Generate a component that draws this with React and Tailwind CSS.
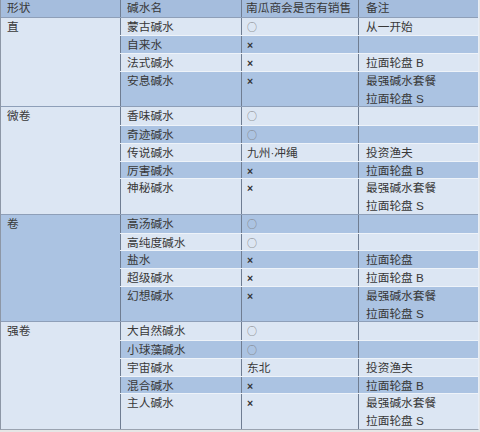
import React from 'react';

const LIGHT = 'bg-[#dce6f3]';
const DARK = 'bg-[#abc3e2]';

const groups = [
  {
    shape: '直',
    rows: [
      ['蒙古碱水', '○', ['从一开始']],
      ['自来水', '×', []],
      ['法式碱水', '×', ['拉面轮盘 B']],
      ['安息碱水', '×', ['最强碱水套餐', '拉面轮盘 S']],
    ],
  },
  {
    shape: '微卷',
    rows: [
      ['香味碱水', '○', []],
      ['奇迹碱水', '○', []],
      ['传说碱水', '九州·冲绳', ['投资渔夫']],
      ['厉害碱水', '×', ['拉面轮盘 B']],
      ['神秘碱水', '×', ['最强碱水套餐', '拉面轮盘 S']],
    ],
  },
  {
    shape: '卷',
    rows: [
      ['高汤碱水', '○', []],
      ['高纯度碱水', '○', []],
      ['盐水', '×', ['拉面轮盘']],
      ['超级碱水', '×', ['拉面轮盘 B']],
      ['幻想碱水', '×', ['最强碱水套餐', '拉面轮盘 S']],
    ],
  },
  {
    shape: '强卷',
    rows: [
      ['大自然碱水', '○', []],
      ['小球藻碱水', '○', []],
      ['宇宙碱水', '东北', ['投资渔夫']],
      ['混合碱水', '×', ['拉面轮盘 B']],
      ['主人碱水', '×', ['最强碱水套餐', '拉面轮盘 S']],
    ],
  },
];

const Sale = ({ value }) => {
  if (value === '○')
    return <span className="font-['Noto_Sans_CJK_SC',sans-serif] text-[10px] text-[#7d7d7d]">○</span>;
  if (value === '×') return <span className="text-[10.5px] font-bold text-[#333]">×</span>;
  return <span>{value}</span>;
};

export default function App() {
  let idx = 0;
  return (
    <div className="w-[480px] h-[432px] bg-[#e6e6e6] font-['Liberation_Sans','Noto_Sans_CJK_SC',sans-serif] text-[11.7px] leading-[17.75px] text-[#383838]">
      <div className="w-[479px] border-l border-l-[#8d97a6] border-r border-r-[#e9eef6] border-b border-b-[#9aa3b0]">
        <div className="flex h-[17.5px] bg-[#a5bddd] border-b border-b-[#8e9fb8] leading-[16.5px]">
          <div className="w-[119px] pl-[6px]">形状</div>
          <div className="w-[121px] pl-[6px] border-l border-l-[#6f7d92]">碱水名</div>
          <div className="w-[117px] pl-[4px] border-l border-l-[#6f7d92]">南瓜商会是否有销售</div>
          <div className="flex-1 pl-[7px] border-l border-l-[#6f7d92]">备注</div>
        </div>
        {groups.map((g, gi) => {
          const firstBg = idx % 2 === 0 ? LIGHT : DARK;
          return (
            <div key={g.shape} className={`flex ${gi > 0 ? 'border-t border-t-[#8e9fb8]' : ''}`}>
              <div className={`w-[119px] pl-[6px] ${firstBg}`}>{g.shape}</div>
              <div className="flex-1 flex flex-col">
                {g.rows.map(([name, sale, notes], ri) => {
                  const bg = idx % 2 === 0 ? LIGHT : DARK;
                  idx += 1;
                  const double = notes.length > 1;
                  return (
                    <div
                      key={name}
                      className={`flex ${bg} ${double ? 'h-[35.5px]' : 'h-[17.75px]'} ${ri > 0 ? 'border-t border-t-[#eef3f9]' : ''}`}
                    >
                      <div className="w-[121px] pl-[6px] border-l border-l-[#6f7d92]">{name}</div>
                      <div className="w-[117px] pl-[5px] border-l border-l-[#6f7d92]">
                        <Sale value={sale} />
                      </div>
                      <div className="flex-1 pl-[7px] border-l border-l-[#6f7d92] flex flex-col">
                        {notes.map((n) => (
                          <span key={n}>{n}</span>
                        ))}
                      </div>
                    </div>
                  );
                })}
              </div>
            </div>
          );
        })}
      </div>
    </div>
  );
}
